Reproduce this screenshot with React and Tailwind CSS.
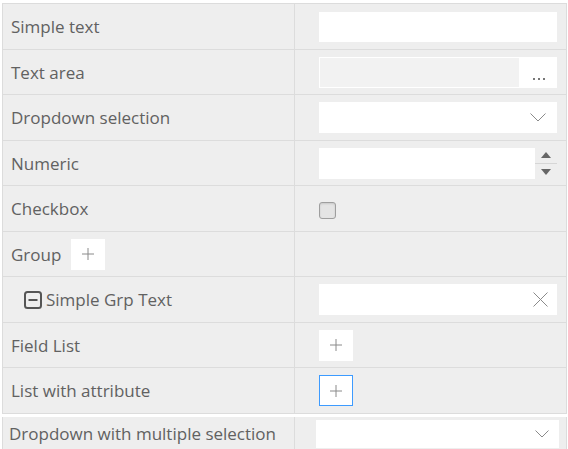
import React from 'react';

const font = { fontFamily: '"Open Sans", "Liberation Sans", sans-serif' };

function Plus() {
  return (
    <svg width="14" height="14" viewBox="0 0 14 14">
      <path d="M7 1v12M1 7h12" stroke="#8a8a8a" strokeWidth="1" fill="none" />
    </svg>
  );
}

function Chevron({ w = 16, h = 9 }) {
  return (
    <svg width={w} height={h} viewBox={`0 0 ${w} ${h}`}>
      <path d={`M0.5 0.5L${w / 2} ${h - 1}L${w - 0.5} 0.5`} stroke="#8a8a8a" strokeWidth="1" fill="none" />
    </svg>
  );
}

function PlusBox({ active }) {
  return (
    <div
      className={`w-[34px] h-[31px] bg-white flex items-center justify-center ${
        active ? 'border border-[#3d9bff]' : ''
      }`}
    >
      <Plus />
    </div>
  );
}

function Row({ label, h, children }) {
  return (
    <div className={`flex border-b border-[#dcdcdc] ${h}`}>
      <div className="w-[292px] shrink-0 border-r border-[#dcdcdc] flex items-center pl-[8px]">{label}</div>
      <div className="flex-1 flex items-center pl-[24px]">{children}</div>
    </div>
  );
}

const Label = ({ children }) => (
  <span className="text-[17px] text-[#616161] leading-none">{children}</span>
);

export default function App() {
  return (
    <div className="w-[568px] h-[449px] bg-white overflow-hidden pt-[3px]" style={font}>
      <div className="ml-[2px] w-[565px] border-l border-r border-t border-[#dcdcdc] bg-[#eeeeee]">
        <Row h="h-[46px]" label={<Label>Simple text</Label>}>
          <div className="w-[238px] h-[30px] bg-white" />
        </Row>
        <Row h="h-[45px]" label={<Label>Text area</Label>}>
          <div className="w-[238px] h-[31px] bg-white flex">
            <div className="w-[201px] h-full border border-white bg-[#f2f2f2]" />
            <div className="flex-1 flex items-end justify-center pb-[8px] gap-[3px]">
              <span className="w-[2px] h-[2px] bg-[#777]" />
              <span className="w-[2px] h-[2px] bg-[#777]" />
              <span className="w-[2px] h-[2px] bg-[#777]" />
            </div>
          </div>
        </Row>
        <Row h="h-[46px]" label={<Label>Dropdown selection</Label>}>
          <div className="w-[238px] h-[31px] bg-white flex items-center justify-end pr-[11px]">
            <Chevron />
          </div>
        </Row>
        <Row h="h-[45px]" label={<Label>Numeric</Label>}>
          <div className="w-[238px] h-[31px] flex">
            <div className="w-[216px] h-full bg-white" />
            <div className="flex-1 flex flex-col items-center justify-center">
              <svg width="10" height="6" viewBox="0 0 10 6">
                <path d="M5 0L10 6H0Z" fill="#666" />
              </svg>
              <div className="w-full h-px bg-[#d6d6d6] my-[5px]" />
              <svg width="10" height="6" viewBox="0 0 10 6">
                <path d="M0 0H10L5 6Z" fill="#666" />
              </svg>
            </div>
          </div>
        </Row>
        <Row h="h-[46px]" label={<Label>Checkbox</Label>}>
          <div className="w-[17px] h-[17px] mt-[3px] rounded-[3px] border border-[#9e9e9e] bg-[#e4e4e4] shadow-[inset_0_1px_2px_rgba(0,0,0,0.12)]" />
        </Row>
        <Row
          h="h-[45px]"
          label={
            <div className="flex items-center">
              <Label>Group</Label>
              <div className="ml-[10px]">
                <PlusBox />
              </div>
            </div>
          }
        />
        <Row
          h="h-[46px]"
          label={
            <div className="flex items-center pl-[13px]">
              <svg width="18" height="18" viewBox="0 0 18 18" className="mr-[4px]">
                <rect x="1" y="1" width="16" height="16" rx="2.5" stroke="#555" strokeWidth="2" fill="none" />
                <path d="M4.5 9h9" stroke="#555" strokeWidth="2" />
              </svg>
              <Label>Simple Grp Text</Label>
            </div>
          }
        >
          <div className="w-[238px] h-[31px] bg-white flex items-center justify-end pr-[9px]">
            <svg width="15" height="15" viewBox="0 0 15 15">
              <path d="M0.5 0.5L14.5 14.5M14.5 0.5L0.5 14.5" stroke="#8a8a8a" strokeWidth="1" fill="none" />
            </svg>
          </div>
        </Row>
        <Row h="h-[45px]" label={<Label>Field List</Label>}>
          <PlusBox />
        </Row>
        <Row h="h-[46px]" label={<Label>List with attribute</Label>}>
          <PlusBox active />
        </Row>
      </div>
      <div className="mt-[3px] ml-[2px] w-[565px] h-[40px] border-l border-r border-[#dcdcdc] bg-[#eeeeee] flex">
        <div className="w-[292px] shrink-0 border-r border-[#dcdcdc] h-[33px] flex items-center pl-[6px]">
          <Label>Dropdown with multiple selection</Label>
        </div>
        <div className="flex-1 flex items-center pl-[21px] h-[33px]">
          <div className="w-[243px] h-[28px] bg-white flex items-center justify-end pr-[10px]">
            <Chevron w={14} h={8} />
          </div>
        </div>
      </div>
    </div>
  );
}
